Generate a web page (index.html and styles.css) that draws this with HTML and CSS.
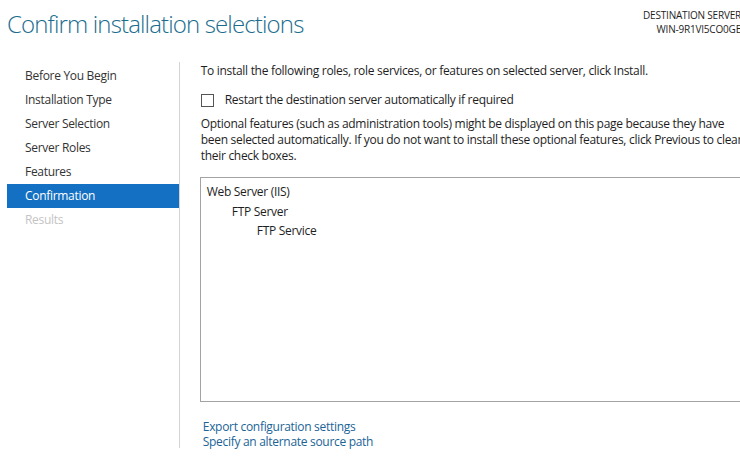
FILE: index.html
```html
<!DOCTYPE html>
<html lang="en">
<head>
    <meta charset="UTF-8">
    <meta name="viewport" content="width=device-width, initial-scale=1.0">
    <title>Add Roles and Features Wizard</title>
    <link rel="stylesheet" href="styles.css">
</head>
<body>

    <div class="wizard">
        <div class="header">
            <h1 class="title">Confirm installation selections</h1>
            <div class="dest">
                <div>DESTINATION SERVER</div>
                <div>WIN-9R1VI5CO0GE</div>
            </div>
        </div>

        <div class="content">
            <ul class="steps">
                <li>Before You Begin</li>
                <li>Installation Type</li>
                <li>Server Selection</li>
                <li>Server Roles</li>
                <li>Features</li>
                <li class="active">Confirmation</li>
                <li class="disabled">Results</li>
            </ul>

            <div class="main">
                <p class="intro">To install the following roles, role services, or features on selected server, click Install.</p>

                <label class="check-row">
                    <span class="checkbox"></span>
                    Restart the destination server automatically if required
                </label>

                <p class="note">Optional features (such as administration tools) might be displayed on this page because they have been selected automatically. If you do not want to install these optional features, click Previous to clear their check boxes.</p>

                <div class="selection-box">
                    <div class="item level-0">Web Server (IIS)</div>
                    <div class="item level-1">FTP Server</div>
                    <div class="item level-2">FTP Service</div>
                </div>

                <div class="links">
                    <a href="#">Export configuration settings</a>
                    <a href="#">Specify an alternate source path</a>
                </div>
            </div>
        </div>
    </div>

</body>
</html>
```

FILE: styles.css
```css
body {
    margin: 0;
    background-color: #fff;
    font-family: "Open Sans", "Noto Sans", sans-serif;
    font-size: 12px;
    letter-spacing: -0.3px;
    color: #1e1e1e;
    overflow: hidden;
}

.wizard {
    width: 760px;
    height: 463px;
}

/* header */
.header {
    display: flex;
    justify-content: space-between;
    height: 62px;
}

.title {
    margin: 0;
    padding: 8px 0 0 7px;
    font-size: 24px;
    font-weight: 300;
    letter-spacing: -0.85px;
    line-height: 32px;
    color: #1b6d8e;
}

.dest {
    padding: 8px 19px 0 0;
    font-size: 10px;
    letter-spacing: -0.2px;
    line-height: 14px;
    text-align: right;
    color: #1e1e1e;
}

/* body */
.content {
    display: flex;
}

.steps {
    list-style: none;
    margin: 2px 0 0 7px;
    padding: 0;
    width: 172px;
}

.steps li {
    height: 24px;
    line-height: 24px;
    padding-left: 18px;
    color: #333;
}

.steps li.active {
    background-color: #1470c2;
    color: #fff;
}

.steps li.disabled {
    color: #c4c4c4;
}

.main {
    border-left: 1px solid #d4d4d4;
    padding: 1px 0 0 21px;
    width: 560px;
    height: 385px;
}

.intro {
    margin: 0;
    line-height: 16px;
}

.check-row {
    display: flex;
    align-items: center;
    margin-top: 13px;
    height: 16px;
    line-height: 16px;
}

.checkbox {
    width: 11px;
    height: 11px;
    border: 1px solid #555;
    margin-right: 11px;
}

.note {
    margin: 8px 0 0 0;
    width: 545px;
    line-height: 16px;
}

.selection-box {
    margin: 13px 0 0 -1px;
    height: 219px;
    border: 1px solid #a3a3a3;
    padding-top: 4px;
}

.item {
    line-height: 19.5px;
}

.level-0 {
    padding-left: 6px;
}

.level-1 {
    padding-left: 31px;
}

.level-2 {
    padding-left: 56px;
}

.links {
    display: flex;
    flex-direction: column;
    margin: 17px 0 0 2px;
}

.links a {
    line-height: 15px;
    color: #1a6496;
    text-decoration: none;
}
```
